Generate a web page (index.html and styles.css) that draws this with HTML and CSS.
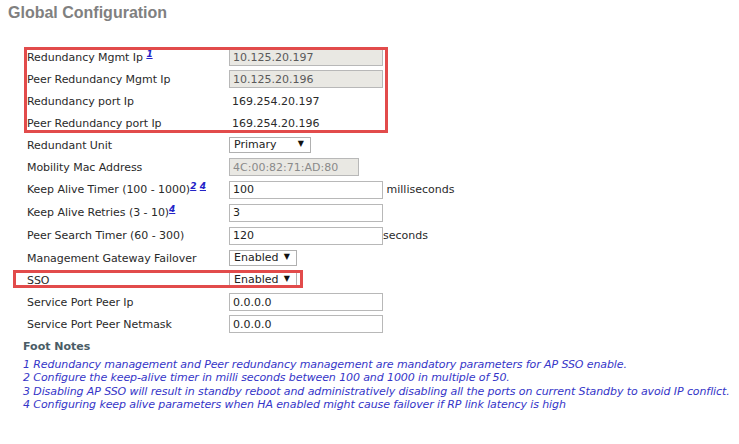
FILE: index.html
```html
<!DOCTYPE html>
<html lang="en">
<head>
    <meta charset="UTF-8">
    <title>Global Configuration</title>
    <link rel="stylesheet" href="styles.css">
</head>
<body>

    <h1 class="page-title">Global Configuration</h1>

    <!-- Redundancy settings -->
    <div class="config">
        <table class="config-table">
            <tr>
                <td class="label">Redundancy Mgmt Ip <a class="note" href="#">1</a></td>
                <td><input class="field readonly" type="text" value="10.125.20.197" readonly></td>
            </tr>
            <tr>
                <td class="label">Peer Redundancy Mgmt Ip</td>
                <td><input class="field readonly" type="text" value="10.125.20.196" readonly></td>
            </tr>
            <tr>
                <td class="label">Redundancy port Ip</td>
                <td><span class="plain">169.254.20.197</span></td>
            </tr>
            <tr>
                <td class="label">Peer Redundancy port Ip</td>
                <td><span class="plain">169.254.20.196</span></td>
            </tr>
            <tr>
                <td class="label">Redundant Unit</td>
                <td>
                    <span class="select select-wide">
                        <select><option>Primary</option><option>Secondary</option></select>
                    </span>
                </td>
            </tr>
            <tr>
                <td class="label">Mobility Mac Address</td>
                <td><input class="field readonly mac" type="text" value="4C:00:82:71:AD:80" readonly></td>
            </tr>
            <tr class="tall">
                <td class="label">Keep Alive Timer (100 - 1000)<a class="note" href="#">2</a> <a class="note" href="#">4</a></td>
                <td><input class="field" type="text" value="100"> <span class="unit">milliseconds</span></td>
            </tr>
            <tr class="tall">
                <td class="label">Keep Alive Retries (3 - 10)<a class="note" href="#">4</a></td>
                <td><input class="field" type="text" value="3"></td>
            </tr>
            <tr class="tall">
                <td class="label">Peer Search Timer (60 - 300)</td>
                <td><input class="field" type="text" value="120"><span class="unit">seconds</span></td>
            </tr>
            <tr>
                <td class="label">Management Gateway Failover</td>
                <td>
                    <span class="select">
                        <select><option>Enabled</option><option>Disabled</option></select>
                    </span>
                </td>
            </tr>
            <tr>
                <td class="label">SSO</td>
                <td>
                    <span class="select">
                        <select><option>Enabled</option><option>Disabled</option></select>
                    </span>
                </td>
            </tr>
            <tr>
                <td class="label">Service Port Peer Ip</td>
                <td><input class="field" type="text" value="0.0.0.0"></td>
            </tr>
            <tr>
                <td class="label">Service Port Peer Netmask</td>
                <td><input class="field" type="text" value="0.0.0.0"></td>
            </tr>
        </table>

        <!-- highlight marks drawn over the form -->
        <div class="mark mark-redundancy"></div>
        <div class="mark mark-sso"></div>
    </div>

    <!-- Foot notes -->
    <div class="footnotes">
        <h2>Foot Notes</h2>
        <p>1 Redundancy management and Peer redundancy management are mandatory parameters for AP SSO enable.</p>
        <p>2 Configure the keep-alive timer in milli seconds between 100 and 1000 in multiple of 50.</p>
        <p>3 Disabling AP SSO will result in standby reboot and administratively disabling all the ports on current Standby to avoid IP conflict.</p>
        <p>4 Configuring keep alive parameters when HA enabled might cause failover if RP link latency is high</p>
    </div>

</body>
</html>
```

FILE: styles.css
```css
/* Page */
body {
    margin: 0;
    padding: 0;
    background-color: #ffffff;
    font-family: 'DejaVu Sans', Verdana, sans-serif;
    font-size: 11px;
    color: #2a2a2a;
}

.page-title {
    margin: 0;
    padding: 3px 0 0 8px;
    height: 43px;
    font-family: 'Liberation Sans', Arial, sans-serif;
    font-size: 16px;
    line-height: 20px;
    font-weight: bold;
    color: #808080;
}

/* Form table */
.config {
    position: relative;
}

.config-table {
    margin-left: 25px;
    border-collapse: collapse;
}

.config-table tr {
    height: 22px;
}

.config-table tr.tall {
    height: 23px;
}

.config-table td {
    padding: 0 2px;
    vertical-align: middle;
    white-space: nowrap;
}

.config-table td.label {
    width: 198px;
    letter-spacing: -0.05px;
}

.note {
    position: relative;
    top: -4px;
    font-size: 9px;
    font-style: italic;
    font-weight: bold;
    color: #2323c8;
}

.field {
    box-sizing: border-box;
    width: 154px;
    height: 18px;
    margin: 0;
    padding: 0 3px;
    border: 1px solid #b8b8b8;
    font-family: 'DejaVu Sans', Verdana, sans-serif;
    font-size: 11px;
    color: #222;
    vertical-align: middle;
}

.field.readonly {
    background-color: #e9e8e3;
    color: #5a5a5a;
}

.field.mac {
    width: 130px;
    color: #8a8a8a;
}

.plain {
    padding-left: 3px;
}

.unit {
    padding-left: 0;
}

/* Select boxes */
.select {
    position: relative;
    display: inline-block;
    vertical-align: middle;
}

.select select {
    -webkit-appearance: none;
    appearance: none;
    box-sizing: border-box;
    width: 68px;
    height: 16px;
    margin: 0;
    padding: 0 0 0 4px;
    border: 1px solid #b0b0b0;
    border-radius: 0;
    background-color: #ffffff;
    font-family: 'DejaVu Sans', Verdana, sans-serif;
    font-size: 11px;
    line-height: 14px;
    color: #222;
}

.select-wide select {
    width: 82px;
}

.select::after {
    content: "\25BC";
    position: absolute;
    right: 7px;
    top: 2px;
    font-size: 8px;
    color: #111;
    pointer-events: none;
}

/* Red highlight marks */
.mark {
    position: absolute;
    box-sizing: border-box;
    border: 3px solid #e24b4b;
}

.mark-redundancy {
    left: 24px;
    top: 1px;
    width: 364px;
    height: 86px;
}

.mark-sso {
    left: 13px;
    top: 224px;
    width: 290px;
    height: 18px;
}

/* Foot notes */
.footnotes {
    padding: 5px 0 0 23px;
}

.footnotes h2 {
    margin: 0 0 4px 0;
    font-size: 11px;
    line-height: 14px;
    font-weight: bold;
    color: #4a5c66;
}

.footnotes p {
    margin: 0;
    font-style: italic;
    line-height: 13.3px;
    letter-spacing: -0.1px;
    white-space: nowrap;
    color: #3535c8;
}
```
